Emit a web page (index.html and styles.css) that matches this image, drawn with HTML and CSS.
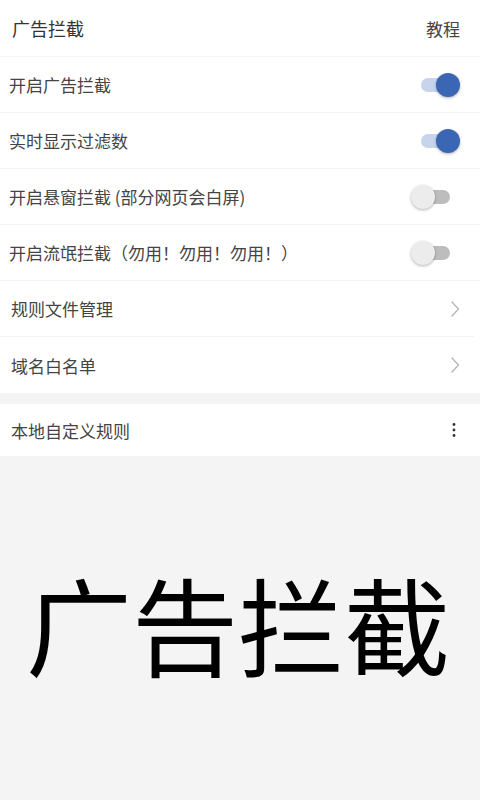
FILE: index.html
```html
<!DOCTYPE html>
<html>
<head>
    <meta charset="UTF-8">
    <title>广告拦截</title>
    <link rel="stylesheet" href="styles.css">
</head>
<body>
    <div class="header">
        <h1>广告拦截</h1>
        <span class="header-link">教程</span>
    </div>

    <div class="card">
        <div class="row">
            <span class="row-title">开启广告拦截</span>
            <div class="switch on"><div class="track"></div><div class="thumb"></div></div>
        </div>
        <div class="row">
            <span class="row-title">实时显示过滤数</span>
            <div class="switch on"><div class="track"></div><div class="thumb"></div></div>
        </div>
        <div class="row">
            <span class="row-title">开启悬窗拦截 (部分网页会白屏)</span>
            <div class="switch"><div class="track"></div><div class="thumb"></div></div>
        </div>
        <div class="row">
            <span class="row-title">开启流氓拦截（勿用！勿用！勿用！）</span>
            <div class="switch"><div class="track"></div><div class="thumb"></div></div>
        </div>
        <div class="row link">
            <span class="row-title">规则文件管理</span>
            <svg class="chevron" width="10" height="18" viewBox="0 0 10 18"><path d="M1.5 1.5 L8.5 9 L1.5 16.5" fill="none" stroke="#b8b8b8" stroke-width="1.4"/></svg>
        </div>
        <div class="row link">
            <span class="row-title">域名白名单</span>
            <svg class="chevron" width="10" height="18" viewBox="0 0 10 18"><path d="M1.5 1.5 L8.5 9 L1.5 16.5" fill="none" stroke="#b8b8b8" stroke-width="1.4"/></svg>
        </div>
    </div>

    <div class="card section">
        <div class="row">
            <span class="row-title">本地自定义规则</span>
            <svg class="dots" width="4" height="16" viewBox="0 0 4 16"><circle cx="2" cy="2.5" r="1.4" fill="#333"/><circle cx="2" cy="8" r="1.4" fill="#333"/><circle cx="2" cy="13.5" r="1.4" fill="#333"/></svg>
        </div>
    </div>

    <div class="banner">广告拦截</div>
</body>
</html>
```

FILE: styles.css
```css
* {
    margin: 0;
    padding: 0;
    box-sizing: border-box;
}

body {
    font-family: "Noto Sans CJK SC", "Noto Sans", sans-serif;
    background: #f4f4f4;
    color: #444;
    width: 480px;
    min-height: 800px;
}

.header {
    height: 56px;
    background: white;
    display: flex;
    align-items: center;
    justify-content: space-between;
    padding: 0 20px 0 12px;
    margin-bottom: 1px;
}

.header h1 {
    font-size: 18px;
    font-weight: normal;
    color: #333;
}

.header-link {
    font-size: 17px;
    color: #444;
}

.card {
    background: white;
}

.card.section {
    margin-top: 11px;
}

.row {
    height: 56px;
    display: flex;
    align-items: center;
    justify-content: space-between;
    padding: 0 20px 0 9px;
    border-bottom: 1px solid #f3f3f3;
}

.row:last-child {
    border-bottom: none;
}

.row.link {
    padding: 0 14px 0 11px;
    margin-right: 6px;
}

.card.section .row {
    height: 52px;
    padding: 0 24px 0 11px;
}

.row-title {
    font-size: 17px;
    color: #444;
}

.switch {
    position: relative;
    width: 40px;
    height: 26px;
}

.switch .track {
    position: absolute;
    left: -7px;
    top: 6px;
    width: 37px;
    height: 14px;
    border-radius: 7px;
    background: #bdbdbd;
}

.switch .thumb {
    position: absolute;
    left: -9px;
    top: 1px;
    width: 24px;
    height: 24px;
    border-radius: 50%;
    background: #ececec;
    box-shadow: 0 1px 3px rgba(0, 0, 0, 0.3);
}

.switch.on .track {
    left: 1px;
    width: 30px;
    background: #c7d4ec;
}

.switch.on .thumb {
    left: 16px;
    background: #3a66b3;
}

.banner {
    text-align: center;
    font-size: 106px;
    color: #000;
    line-height: 1;
    margin-top: 113px;
    padding-right: 4px;
}
```
